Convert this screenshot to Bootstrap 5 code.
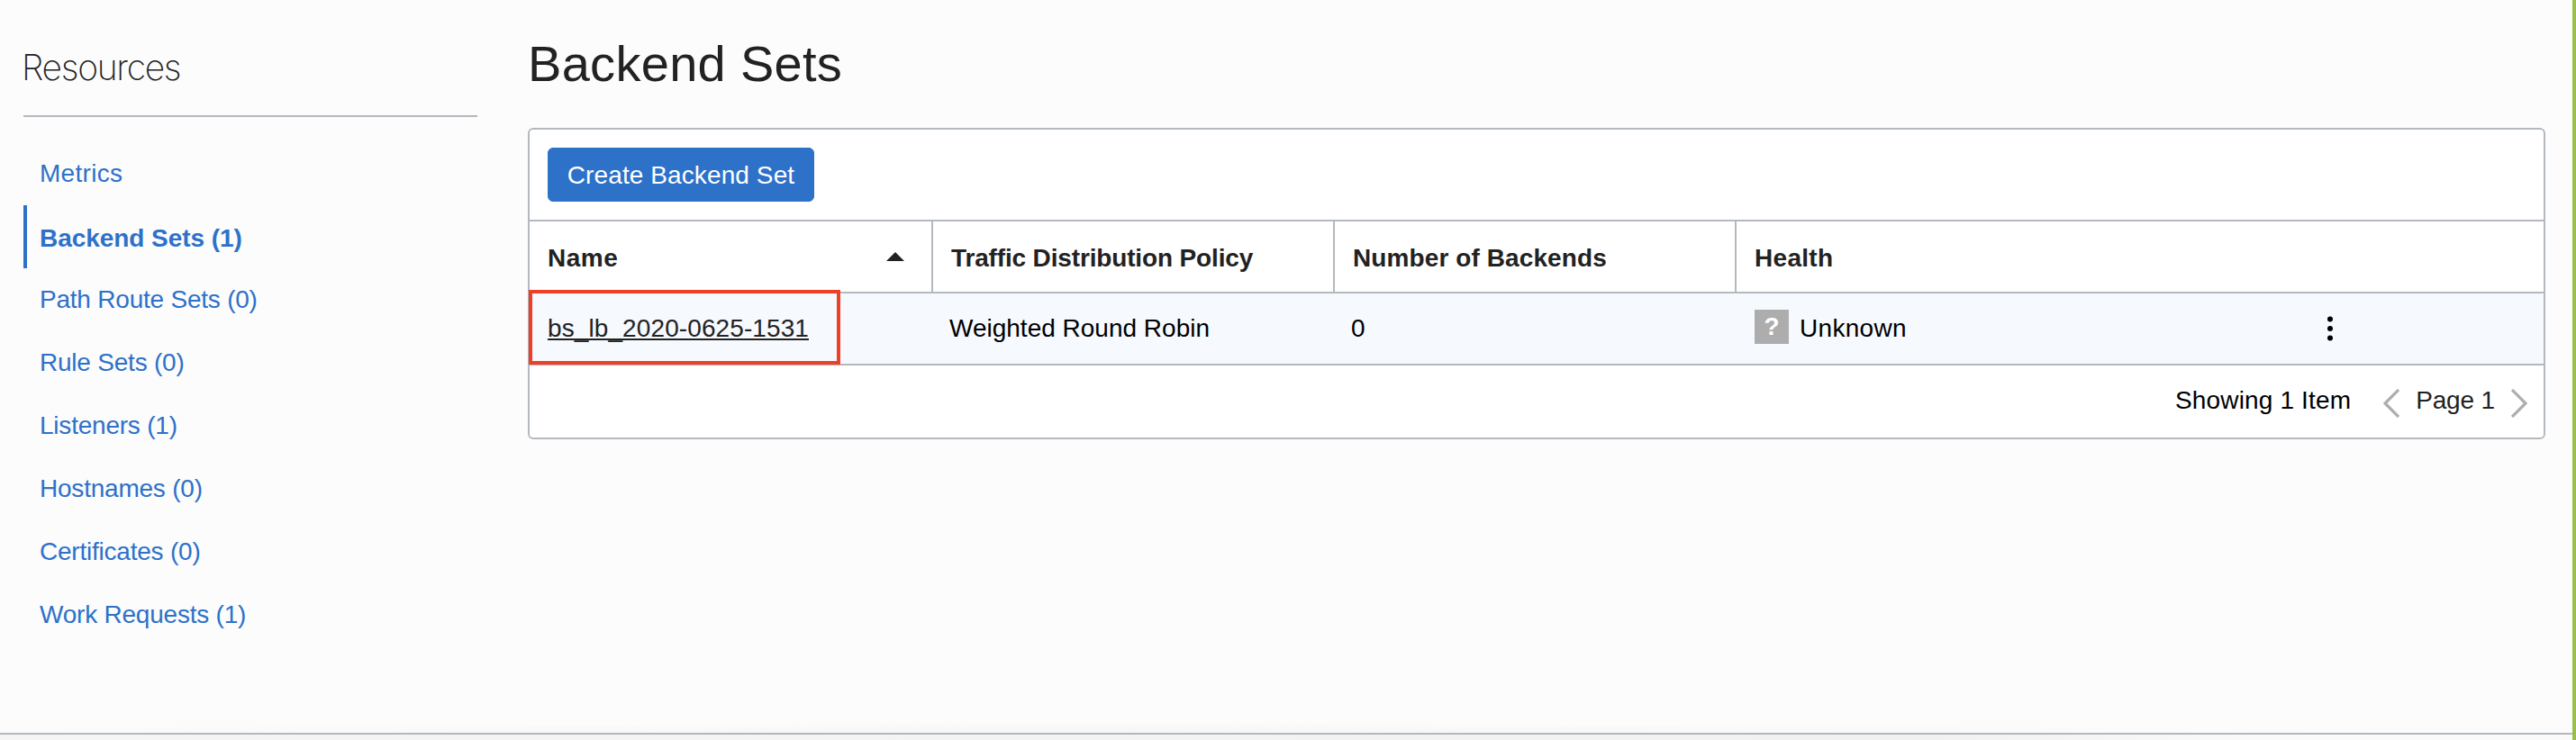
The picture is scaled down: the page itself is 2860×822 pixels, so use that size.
<!DOCTYPE html>
<html lang="en">
<head>
<meta charset="utf-8">
<meta name="viewport" content="width=device-width, initial-scale=1">
<title>Backend Sets</title>
<link rel="stylesheet" href="https://cdn.jsdelivr.net/npm/bootstrap@5.3.0/dist/css/bootstrap.min.css">
<style>
  body { font-family: "Liberation Sans", Arial, sans-serif; font-size: 28px; line-height: 32px; color: #000; background: #fcfcfc; overflow: hidden; }
  .page-shell { height: 822px; border-right: 4px solid #98bf46; }
  .page-main { height: 814px; background: radial-gradient(ellipse 50% 12px at 43% 100%, #f6f6f6, #fcfcfc); }
  .page-foot { height: 8px; border-top: 2px solid #b2b8bd; background: linear-gradient(90deg, #f5f5f5, #f1f1f1 75%, #fafafa 88%); }
  .resources { width: 504px; margin-left: 26px; }
  .resources h2 { font: 200 39px/46px Inter, sans-serif; letter-spacing: -1.3px; color: #222; padding-top: 52px; height: 130px; border-bottom: 2px solid #b3b9bf; text-indent: -2px; }
  .side-nav { padding-top: 28px; }
  .side-nav .nav-link { height: 70px; padding: 19px 0 0 18px; color: #2d71c9; letter-spacing: -.22px; }
  .side-nav .nav-link:first-child { letter-spacing: .3px; }
  .side-nav .nav-link.active { padding: 21px 0 0 14px; border-left: 4px solid #2d71c9; font-weight: 700; letter-spacing: -.05px; }
  .content { width: 2240px; margin-left: 56px; }
  .content h1 { font-size: 56px; line-height: 64px; height: 142px; padding-top: 39px; color: #222; letter-spacing: .3px; }
  .panel { --bs-card-border-color: #b3b9bf; --bs-card-border-width: 2px; --bs-card-border-radius: 6px; --bs-card-inner-border-radius: 4px; height: 346px; }
  .toolbar { height: 102px; padding: 20px; border-bottom: 2px solid #b3b9bf; }
  .create-btn { --bs-btn-bg: #2d71c9; --bs-btn-border-color: #2d71c9; --bs-btn-color: #fff; width: 296px; height: 60px; padding: 2px 0 0; font-size: 28px; border-radius: 6px; letter-spacing: .1px; }
  .grid-row { display: grid; grid-template-columns: 448px 446px 446px 1fr; height: 80px; border-bottom: 2px solid #b3b9bf; }
  .grid-head > div { border-right: 2px solid #b3b9bf; padding: 25px 0 0 20px; color: #222; font-weight: 700; }
  .grid-head > div:last-child { border-right: 0; }
  .grid-data { background: #f6f9fe; position: relative; }
  .grid-data > div { padding: 23px 0 0 18px; }
  .grid-data > div:first-child { padding-left: 20px; }
  .set-link { color: #222; text-decoration: none; letter-spacing: .1px; display: block; width: fit-content; height: 29px; border-bottom: 2px solid #222; white-space: nowrap; }
  .marker { left: -1px; top: -4px; width: 346px; height: 83px; border: 4px solid #ee4027; pointer-events: none; }
  .unknown-box { width: 38px; height: 38px; background: #adadad; color: #fff; font-weight: 700; line-height: 38px; margin: -5px 12px 0 2px; text-align: center; }
  .pager { height: 80px; padding: 23px 18px 0 0; }
  .pager svg { margin-top: 3px; }
  .t-sort { margin: 9px 30px 0 0; }
</style>
</head>
<body>
<div class="page-shell">
  <div class="page-main d-flex">
    <aside class="resources flex-shrink-0">
      <h2 class="m-0">Resources</h2>
      <nav class="side-nav nav flex-column">
        <a class="nav-link" href="#">Metrics</a>
        <a class="nav-link active" href="#">Backend Sets (1)</a>
        <a class="nav-link" href="#">Path Route Sets (0)</a>
        <a class="nav-link" href="#">Rule Sets (0)</a>
        <a class="nav-link" href="#">Listeners (1)</a>
        <a class="nav-link" href="#">Hostnames (0)</a>
        <a class="nav-link" href="#">Certificates (0)</a>
        <a class="nav-link" href="#">Work Requests (1)</a>
      </nav>
    </aside>
    <main class="content flex-shrink-0">
      <h1 class="m-0 fw-normal">Backend Sets</h1>
      <section class="panel card">
        <div class="toolbar"><button class="create-btn btn d-block" type="button">Create Backend Set</button></div>
        <div class="grid-row grid-head">
          <div class="d-flex justify-content-between"><span style="letter-spacing:.5px">Name</span>
            <svg class="t-sort" width="20" height="10" viewBox="0 0 20 10"><path d="M0 10 10 0 20 10Z" fill="#222"/></svg></div>
          <div style="letter-spacing:-.15px">Traffic Distribution Policy</div>
          <div style="letter-spacing:.1px">Number of Backends</div>
          <div style="letter-spacing:.3px">Health</div>
        </div>
        <div class="grid-row grid-data">
          <div><a class="set-link" href="#">bs_lb_2020-0625-1531</a></div>
          <div>Weighted Round Robin</div>
          <div>0</div>
          <div class="d-flex">
            <span class="unknown-box">?</span><span style="letter-spacing:.3px">Unknown</span>
            <svg class="ms-auto" style="margin-right:234px;margin-top:2px" width="6" height="28" viewBox="0 0 6 28"><circle cx="3" cy="3.5" r="3"/><circle cx="3" cy="14" r="3"/><circle cx="3" cy="24.5" r="3"/></svg>
          </div>
          <div class="marker position-absolute p-0"></div>
        </div>
        <div class="pager d-flex justify-content-end">
          <span style="letter-spacing:.15px;margin-right:36px">Showing 1 Item</span>
          <svg width="18" height="32" viewBox="0 0 18 32" fill="none" stroke="#adadad" stroke-width="3.2"><path d="M17 1 2 16 17 31"/></svg>
          <span style="color:#222;letter-spacing:-.15px;margin:0 18px 0 18px">Page 1</span>
          <svg width="18" height="32" viewBox="0 0 18 32" fill="none" stroke="#adadad" stroke-width="3.2"><path d="M1 1 16 16 1 31"/></svg>
        </div>
      </section>
    </main>
  </div>
  <footer class="page-foot"></footer>
</div>
<script src="https://cdn.jsdelivr.net/npm/bootstrap@5.3.0/dist/js/bootstrap.bundle.min.js"></script>
</body>
</html>
